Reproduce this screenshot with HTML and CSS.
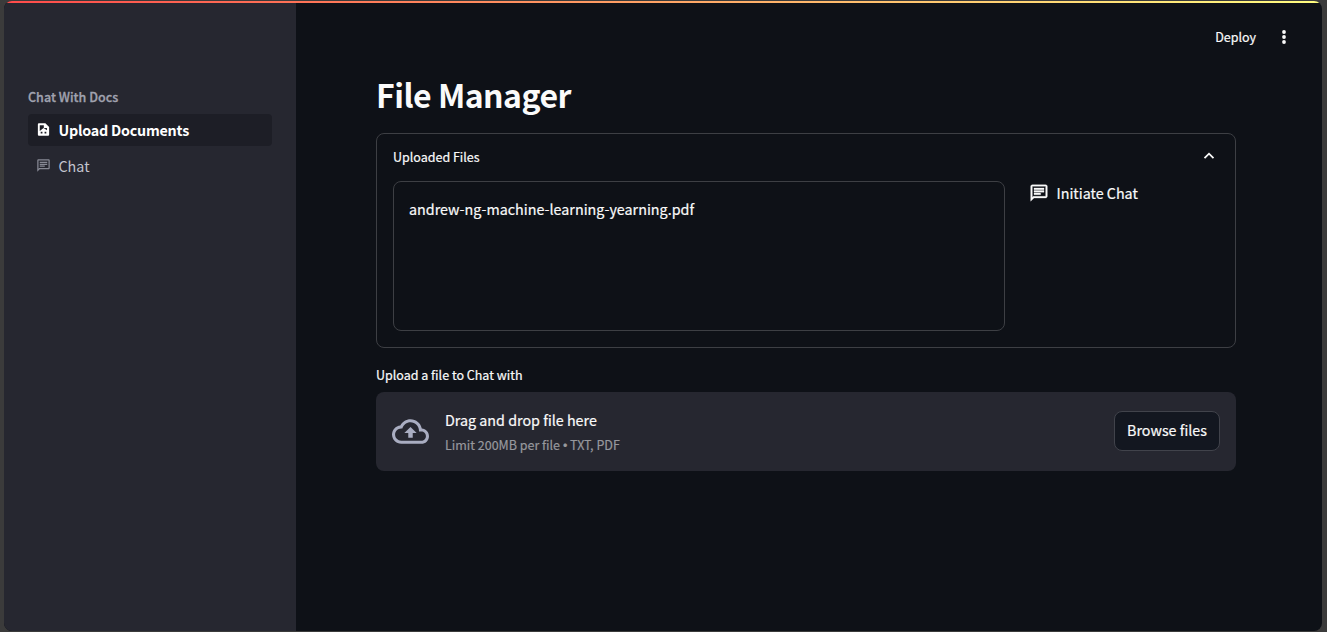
FILE: index.html
```html
<!DOCTYPE html>
<html lang="en">
<head>
<meta charset="utf-8">
<title>File Manager</title>
<link rel="stylesheet" href="styles.css">
</head>
<body>
<div class="app">
  <div class="decoration"></div>
  <aside class="sidebar">
    <div class="nav-heading">Chat With Docs</div>
    <nav class="nav">
      <a class="nav-item active">
        <svg class="nav-icon" viewBox="0 0 24 24"><path fill-rule="evenodd" d="M14 2H5c-1.100 0-2 .9-2 2v16c0 1.100.9 2 2 2h14c1.100 0 2-.9 2-2V8l-6-6zM6 5h6.500v4.500H17.500V13L12 9.500 6 14.500zM7.500 15.500h2.800v3H7.500zM13.700 15.500h2.800v3h-2.800z"/></svg>
        <span>Upload Documents</span>
      </a>
      <a class="nav-item">
        <svg class="nav-icon" viewBox="0 0 24 24"><path d="M4 4h16v12H5.200L4 17.200V4m0-2c-1.100 0-2 .9-2 2v18l4-4h14c1.100 0 2-.9 2-2V4c0-1.100-.9-2-2-2H4zm2 10h8v2H6v-2zm0-3h12v2H6V9zm0-3h12v2H6V6z"/></svg>
        <span>Chat</span>
      </a>
    </nav>
  </aside>
  <main class="main">
    <header class="toolbar">
      <span class="deploy">Deploy</span>
      <svg class="menu-icon" viewBox="0 0 16 16"><circle cx="8" cy="3" r="1.900"/><circle cx="8" cy="8" r="1.900"/><circle cx="8" cy="13" r="1.900"/></svg>
    </header>
    <div class="content">
      <h1 class="title">File Manager</h1>
      <section class="expander">
        <div class="summary">
          <span class="small-text">Uploaded Files</span>
          <svg class="chevron" viewBox="0 0 12 12"><path d="M1.500 8.200 6 3.700l4.500 4.500"/></svg>
        </div>
        <div class="columns">
          <div class="file-list"><span class="file-name">andrew-ng-machine-learning-yearning.pdf</span></div>
          <a class="initiate">
            <svg class="chat-icon" viewBox="0 0 24 24"><path d="M4 4h16v12H5.200L4 17.200V4m0-2c-1.100 0-2 .9-2 2v18l4-4h14c1.100 0 2-.9 2-2V4c0-1.100-.9-2-2-2H4zm2 10h8v2H6v-2zm0-3h12v2H6V9zm0-3h12v2H6V6z"/></svg>
            <span class="initiate-text">Initiate Chat</span>
          </a>
        </div>
      </section>
      <div class="upload-label">Upload a file to Chat with</div>
      <section class="dropzone">
        <svg class="cloud" viewBox="0 0 24 24"><path d="M19.350 10.040C18.670 6.590 15.640 4 12 4 9.110 4 6.600 5.640 5.350 8.040 2.340 8.360 0 10.910 0 14c0 3.310 2.690 6 6 6h13c2.760 0 5-2.240 5-5 0-2.640-2.050-4.780-4.650-4.960zM19 18H6c-2.210 0-4-1.790-4-4s1.790-4 4-4h.71C7.370 7.690 9.480 6 12 6c3.040 0 5.500 2.460 5.500 5.500v.5H19c1.660 0 3 1.340 3 3s-1.340 3-3 3zM8 13h2.550v3h2.900v-3H16l-4-4-4 4z"/></svg>
        <div class="instructions">
          <span class="drag">Drag and drop file here</span>
          <span class="limit">Limit 200MB per file <span class="bullet">•</span> TXT, PDF</span>
        </div>
        <button class="browse">Browse files</button>
      </section>
    </div>
  </main>
</div>
</body>
</html>
```

FILE: styles.css
```css
* { box-sizing: border-box; }
html, body { height: 100%; }
body {
  margin: 0;
  padding: 1px 5px 1px 4px;
  background: #3b3b3b;
  color: #fafafa;
  font-family: "Noto Sans CJK SC", "Noto Sans", sans-serif;
  font-size: 14.3px;
  line-height: 24px;
  -webkit-text-stroke: 0.2px currentColor;
}
svg { display: block; fill: currentColor; flex: none; }
span { white-space: nowrap; }
.app {
  position: relative;
  display: flex;
  height: 630px;
  border-radius: 8px;
  overflow: hidden;
  background: #0e1117;
}
.decoration {
  position: absolute;
  inset: 0 0 auto;
  height: 2px;
  background: linear-gradient(90deg, #ff4b4b, #fffd80);
}
.sidebar { width: 292px; padding: 84px 24px 0; background: #262730; }
.nav-heading { font-size: 12.5px; font-weight: 500; color: #a0a2af; height: 29px; letter-spacing: 0.03px; -webkit-text-stroke-width: 0.3px; }
.nav { display: flex; flex-direction: column; gap: 4px; }
.nav-item {
  display: flex;
  align-items: center;
  height: 32px;
  padding: 0 8px;
  gap: 7.5px;
  border-radius: 4px;
  color: #c3c4ce;
  -webkit-text-stroke-width: 0;
}
.nav-item.active { background: #1d1e26; color: #fff; font-weight: 700; letter-spacing: -0.22px; }
.nav-icon { width: 15px; height: 15px; margin-top: -1px; }
.nav-item:not(.active) .nav-icon { color: #878994; }
.main { flex: 1; }
.toolbar {
  display: flex;
  justify-content: flex-end;
  align-items: center;
  height: 72px;
  padding-right: 30px;
  gap: 20px;
}
.deploy { font-size: 12.5px; }
.menu-icon { width: 16px; height: 16px; }
.content { width: 860px; margin-left: 80px; }
.title { margin: 0; font-size: 32px; font-weight: 700; line-height: 42px; height: 60px; letter-spacing: -0.5px; -webkit-text-stroke-width: 0; }
.expander {
  height: 215px;
  padding: 11px 16px 0 16px;
  border: 1px solid #3d3f44;
  border-radius: 8px;
}
.summary { display: flex; justify-content: space-between; align-items: center; height: 24px; }
.small-text { font-size: 12.5px; }
.chevron { width: 12px; height: 12px; margin: -2px 4px 0 0; fill: none; stroke: #fafafa; stroke-width: 1.8; }
.columns { display: flex; gap: 24px; margin-top: 12px; }
.file-list {
  width: 612px;
  height: 150px;
  padding: 15px;
  border: 1px solid #3d3f44;
  border-radius: 8px;
}
.file-name { letter-spacing: 0.02px; }
.initiate { display: flex; align-items: center; height: 24px; gap: 8px; }
.chat-icon { width: 20px; height: 20px; stroke: currentColor; stroke-width: 0.35; margin-left: -0.5px; }
.upload-label { margin-top: 15px; height: 29px; font-size: 12.5px; }
.dropzone {
  display: flex;
  align-items: center;
  height: 79px;
  padding: 0 16px;
  border-radius: 8px;
  background: #262730;
}
.cloud { width: 37px; height: 37px; color: #a9adc1; }
.instructions { display: flex; flex-direction: column; margin: 1px 0 0 16px; }
.drag { margin-bottom: 1px; }
.limit { font-size: 12.5px; color: #97989d; }
.bullet { display: inline-block; width: 4px; margin: 0 0.2px; font-family: "Liberation Sans", sans-serif; line-height: 20px; }
.browse {
  width: 106px;
  height: 40px;
  margin: -2px 0 0 auto;
  padding: 0 0 2px;
  border: 1px solid #41434b;
  border-radius: 8px;
  background: #131720;
  color: #fafafa;
  font: inherit;
}
```
